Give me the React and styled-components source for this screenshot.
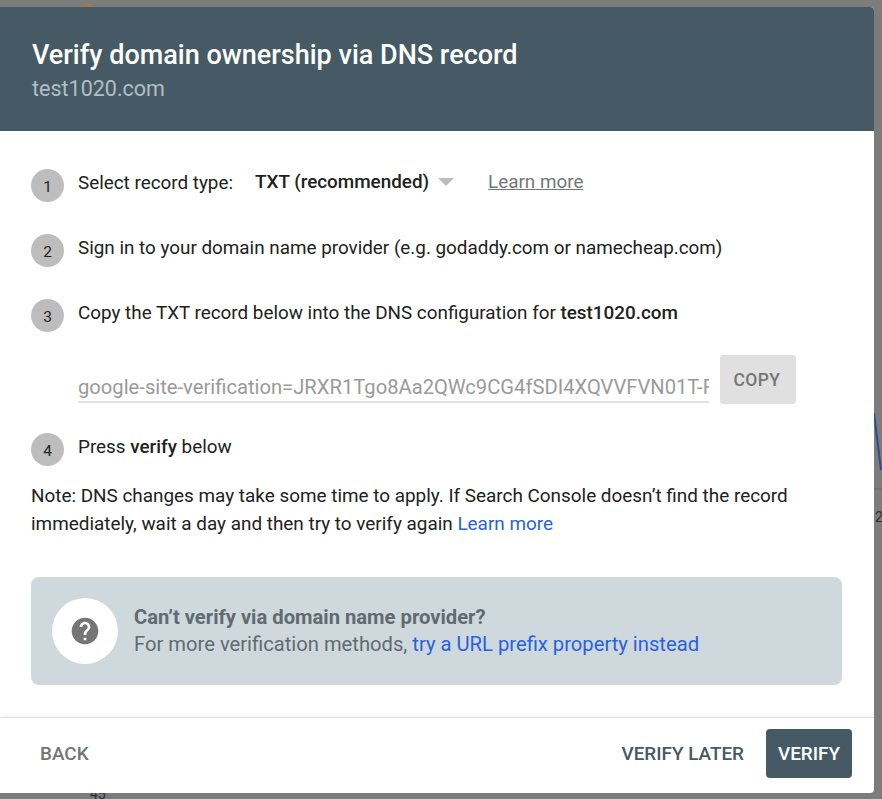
import React from 'react';
import styled, { createGlobalStyle } from 'styled-components';

const Global = createGlobalStyle`
  html, body { margin: 0; padding: 0; background: #7c7c7c; }
  body { font-family: Roboto, "Liberation Sans", sans-serif; overflow: hidden; }
`;
const Backdrop = styled.div`
  position: relative; width: 882px; height: 799px; padding: 7px 8px 6px 0;
  box-sizing: border-box; background: #7c7c7c; overflow: hidden;
`;
const Dot = styled.div`
  position: absolute; left: 78px; top: 3px; width: 17px; height: 17px; border-radius: 50%; background: #9a7a4e;
`;
const ChartStroke = styled.svg`
  position: absolute; left: 874px; top: 410px; width: 8px; height: 120px;
`;
const AxisLabel = styled.span`
  position: absolute; left: ${p => p.$x}px; top: ${p => p.$y}px; font-size: 14px; color: #2e2e2e; line-height: 16px;
`;
const Modal = styled.div`
  position: relative; z-index: 1; width: 874px; height: 786px; background: #fff; border-radius: 0 4px 4px 0;
  display: flex; flex-direction: column; overflow: hidden;
`;
const Header = styled.header`
  height: 124px; background: #455a64; padding: 32px 32px 0; box-sizing: border-box; flex: none;
`;
const Title = styled.h1`
  margin: 0; color: #fff; font-size: 27px; font-weight: 500; line-height: 32px;
`;
const Subtitle = styled.div`
  color: #b0bec5; font-size: 21.5px; line-height: 26px; margin-top: 5px;
`;
const Body = styled.main`
  flex: 1; padding: 38px 32px 0 31px; min-height: 0; box-sizing: border-box;
`;
const Step = styled.div`
  display: flex; align-items: flex-start; height: 33px; margin-bottom: ${p => p.$mb}px;
`;
const Num = styled.span`
  flex: none; width: 33px; height: 33px; border-radius: 50%; background: #bdbdbd; color: #212121;
  font-size: 15.5px; display: flex; align-items: center; justify-content: center; margin-right: 14px; padding-top: 3px; box-sizing: border-box;
`;
const StepText = styled.div`
  font-size: 18.85px; line-height: 28px; color: #212121; white-space: nowrap;
  b { font-weight: 500; }
`;
const Select = styled.span`
  display: inline-flex; align-items: center; font-weight: 500; margin-left: 22px; position: relative; top: -1px;
`;
const Caret = styled.i`
  width: 0; height: 0; border-left: 8px solid transparent; border-right: 8px solid transparent; border-top: 8px solid #bdbdbd;
  margin-left: 9px; margin-right: 34px;
`;
const MutedLink = styled.a`
  color: #757575; text-decoration: underline; font-weight: 400;
`;
const RecordRow = styled.div`
  display: flex; align-items: flex-start; margin: 23px 0 29px 47px; height: 49px;
`;
const RecordField = styled.div`
  width: 631px; height: 48px; box-sizing: border-box; border-bottom: 2px solid #e0e0e0; margin-right: 11px; overflow: hidden;
  color: #9a9a9a; font-size: 20.2px; line-height: 24px; white-space: nowrap; padding-top: 20px;
`;
const CopyBtn = styled.button`
  width: 76px; height: 49px; border: 0; border-radius: 3px; background: #e0e0e0; color: #757575;
  font: 500 17.5px Roboto, sans-serif; letter-spacing: .4px; padding: 0 2px 0 0;
`;
const Note = styled.p`
  margin: 0 0 39px; font-size: 18.9px; line-height: 28px; color: #212121; width: 811px;
`;
const BlueLink = styled.a`
  color: #2962dc; text-decoration: none;
`;
const Callout = styled.div`
  height: 108px; width: 811px; background: #cfd8dc; border-radius: 8px; display: flex; align-items: center; padding-left: 21px; box-sizing: border-box;
`;
const HelpCircle = styled.div`
  width: 66px; height: 66px; border-radius: 50%; background: #fff; display: flex; align-items: center; justify-content: center; margin-right: 16px;
`;
const CalloutTitle = styled.div`
  font-size: 20.2px; font-weight: 700; line-height: 27px; color: #5f6b70;
`;
const CalloutText = styled.div`
  font-size: 20.2px; line-height: 27px; color: #5f6b70;
`;
const Footer = styled.footer`
  height: 76px; flex: none; border-top: 1px solid #e0e0e0; box-shadow: 0 -2px 6px rgba(0,0,0,.04); display: flex; align-items: center;
  padding: 0 22px 5px 40px; box-sizing: border-box;
`;
const TextBtn = styled.button`
  border: 0; background: none; padding: 0; font: 500 18.9px Roboto, sans-serif; color: ${p => p.$color}; margin-left: ${p => p.$ml || 0};
`;
const Primary = styled.button`
  width: 86px; height: 49px; border: 0; border-radius: 4px; background: #455a64; color: #fff; font: 500 18.9px Roboto, sans-serif; padding: 0; margin-left: 22px;
`;

export default function App() {
  return (
    <Backdrop>
      <Global />
      <Dot />
      <ChartStroke viewBox="0 0 8 120"><path d="M0 3 L7 60" stroke="#2a4f8f" strokeWidth="2" fill="none" /><path d="M0 79 H8" stroke="#6a6a6a" /></ChartStroke>
      <AxisLabel $x={875} $y={509}>2</AxisLabel>
      <AxisLabel $x={90} $y={786}>45</AxisLabel>
      <Modal>
        <Header>
          <Title>Verify domain ownership via DNS record</Title>
          <Subtitle>test1020.com</Subtitle>
        </Header>
        <Body>
          <Step $mb={32}>
            <Num>1</Num>
            <StepText>Select record type:<Select>TXT (recommended)<Caret /><MutedLink>Learn more</MutedLink></Select></StepText>
          </Step>
          <Step $mb={32}>
            <Num>2</Num>
            <StepText>Sign in to your domain name provider (e.g. godaddy.com or namecheap.com)</StepText>
          </Step>
          <Step $mb={9}>
            <Num>3</Num>
            <StepText>Copy the TXT record below into the DNS configuration for <b>test1020.com</b></StepText>
          </Step>
          <RecordRow>
            <RecordField>google-site-verification=JRXR1Tgo8Aa2QWc9CG4fSDI4XQVVFVN01T-Fabc</RecordField>
            <CopyBtn>COPY</CopyBtn>
          </RecordRow>
          <Step $mb={16}>
            <Num>4</Num>
            <StepText>Press <b>verify</b> below</StepText>
          </Step>
          <Note>Note: DNS changes may take some time to apply. If Search Console doesn’t find the record immediately, wait a day and then try to verify again <BlueLink>Learn more</BlueLink></Note>
          <Callout>
            <HelpCircle>
              <svg width="32" height="32" viewBox="0 0 24 24"><path fill="#757575" d="M12 2C6.48 2 2 6.48 2 12s4.48 10 10 10 10-4.48 10-10S17.52 2 12 2zm1 17h-2v-2h2v2zm2.07-7.75l-.9.92C13.45 12.9 13 13.5 13 15h-2v-.5c0-1.1.45-2.1 1.17-2.83l1.24-1.26c.37-.36.59-.86.59-1.41 0-1.1-.9-2-2-2s-2 .9-2 2H8c0-2.21 1.79-4 4-4s4 1.79 4 4c0 .88-.36 1.68-.93 2.25z" /></svg>
            </HelpCircle>
            <div>
              <CalloutTitle>Can’t verify via domain name provider?</CalloutTitle>
              <CalloutText>For more verification methods, <BlueLink>try a URL prefix property instead</BlueLink></CalloutText>
            </div>
          </Callout>
        </Body>
        <Footer>
          <TextBtn $color="#757575">BACK</TextBtn>
          <TextBtn $color="#455a64" $ml="auto">VERIFY LATER</TextBtn>
          <Primary>VERIFY</Primary>
        </Footer>
      </Modal>
    </Backdrop>
  );
}
